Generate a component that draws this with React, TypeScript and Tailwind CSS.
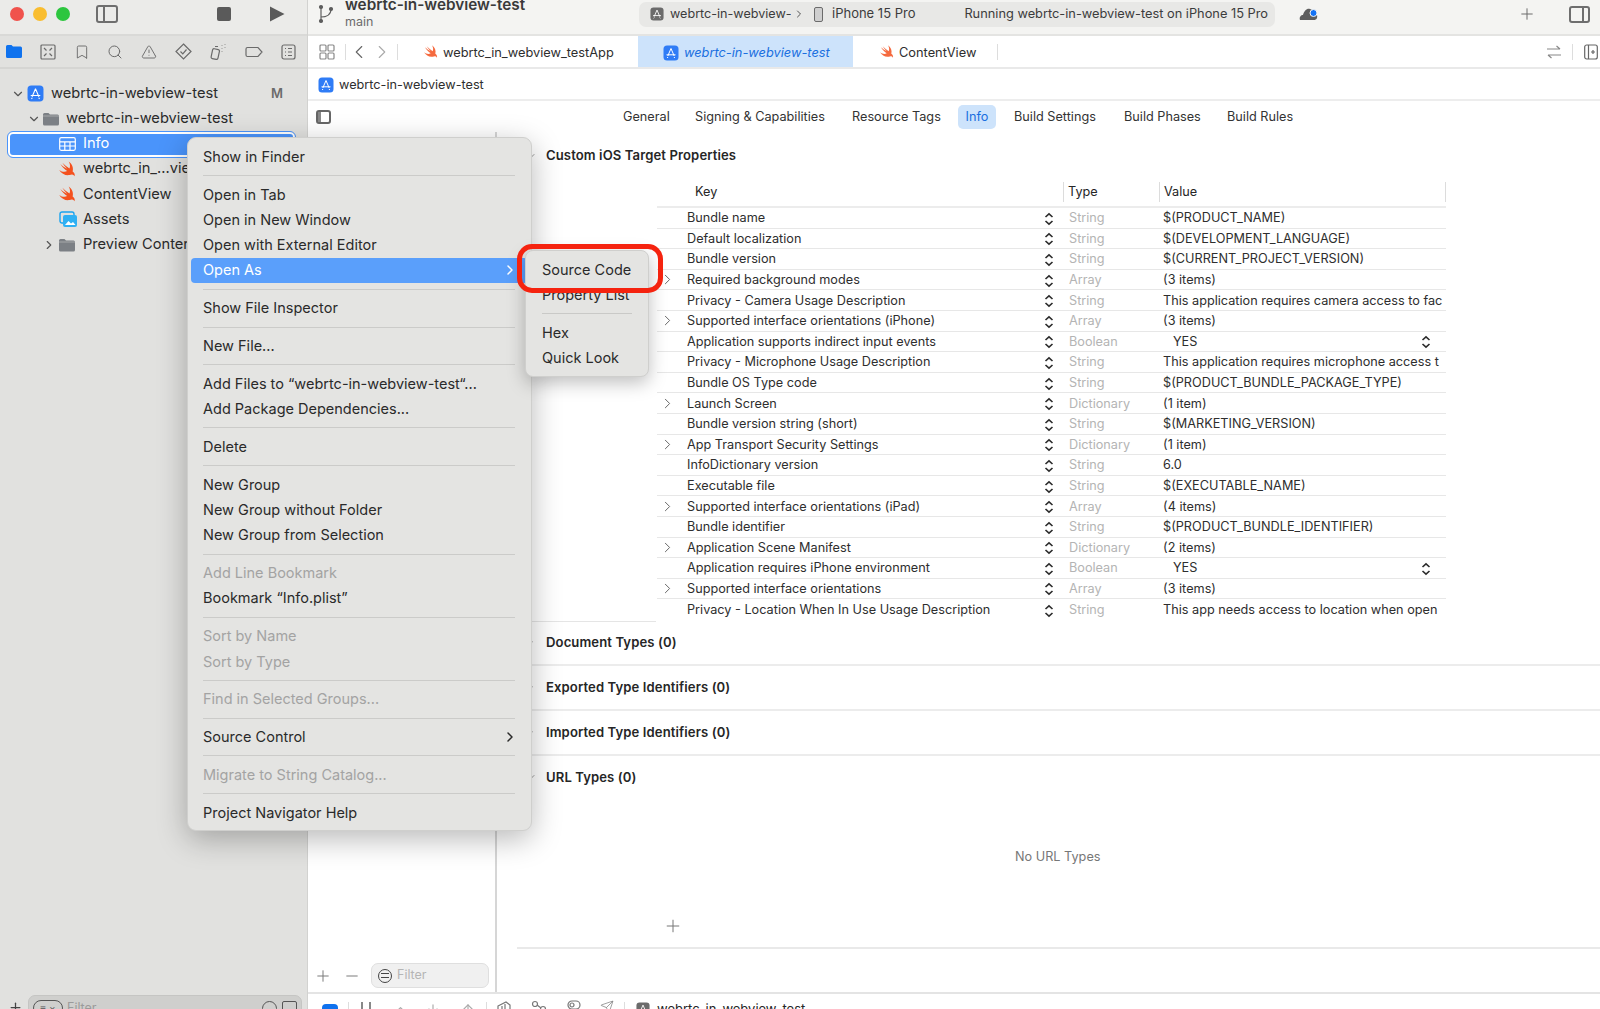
import React from "react";
import { ChevronRight, ChevronDown, ChevronLeft, Plus, Minus, Search, TriangleAlert, Bookmark, ArrowUp, ArrowDown, ChevronUp, Send } from "lucide-react";

const Swift = ({ s = 19, o = 1 }: { s?: number; o?: number }) => (
  <svg width={s} height={s} viewBox="0 0 24 24" style={{ opacity: o }} className="shrink-0">
    <path d="M18.500 14.500c1.300-4.500-.7-9.500-5-12.500 1.700 2.700 2.300 6 1 8.700C11 8.500 8 6 5.500 3.500c1.500 2.500 3.500 5 6 7.500C8.500 9.500 5.500 7.500 3 5c2 3.500 5 6.500 8.500 9-3 1.500-6.500 1-10-1.500 3 4.500 8 7.500 13 6.500 2-.5 3-1 4-.5 1 .3 2 1 2.500 2 .5-2.500-.3-4.500-2.500-6z" fill="#f4511e" />
  </svg>
);

const AppIcon = ({ s = 16, muted = false }: { s?: number; muted?: boolean }) => (
  <svg width={s} height={s} viewBox="0 0 16 16" className="shrink-0">
    <rect x="0.500" y="0.500" width="15" height="15" rx="3.500" fill={muted ? "#6b6b6b" : "#2f7cf6"} />
    <path d="M8 3.500 4.800 11M8 3.500l3.200 7.500M3.500 9.800h9M5 12l-.8 1M11 12l.8 1" stroke="#fff" strokeWidth="1" fill="none" />
  </svg>
);

const Folder = ({ s = 18 }: { s?: number }) => (
  <svg width={s} height={s} viewBox="0 0 18 18" className="shrink-0">
    <path d="M1 4.500A1.500 1.500 0 0 1 2.500 3h4l1.500 1.500h7.500A1.500 1.500 0 0 1 17 6v8a1.500 1.500 0 0 1-1.500 1.500h-13A1.500 1.500 0 0 1 1 14z" fill="#7c8085" />
    <rect x="1" y="5.500" width="16" height="1" fill="#a5a7aa" />
  </svg>
);

const Stroke = ({ children, w = 18, h = 18, vb = "0 0 18 18", c = "#6a6a6a", className = "" }: { children: React.ReactNode; w?: number; h?: number; vb?: string; c?: string; className?: string }) => (
  <svg width={w} height={h} viewBox={vb} fill="none" stroke={c} strokeWidth="1.200" className={`shrink-0 ${className}`}>{children}</svg>
);

const Updown = () => (
  <svg width="10" height="14" viewBox="0 0 10 14" fill="none" stroke="#2c2c2c" strokeWidth="1.600" className="shrink-0 mt-[2px]">
    <path d="M1.500 5 5 1.800 8.500 5M1.500 9 5 12.200 8.500 9" />
  </svg>
);

const rows: [string, string, string, boolean?, boolean?][] = [
  ["Bundle name", "String", "$(PRODUCT_NAME)"],
  ["Default localization", "String", "$(DEVELOPMENT_LANGUAGE)"],
  ["Bundle version", "String", "$(CURRENT_PROJECT_VERSION)"],
  ["Required background modes", "Array", "(3 items)", true],
  ["Privacy - Camera Usage Description", "String", "This application requires camera access to fac"],
  ["Supported interface orientations (iPhone)", "Array", "(3 items)", true],
  ["Application supports indirect input events", "Boolean", "YES", false, true],
  ["Privacy - Microphone Usage Description", "String", "This application requires microphone access t"],
  ["Bundle OS Type code", "String", "$(PRODUCT_BUNDLE_PACKAGE_TYPE)"],
  ["Launch Screen", "Dictionary", "(1 item)", true],
  ["Bundle version string (short)", "String", "$(MARKETING_VERSION)"],
  ["App Transport Security Settings", "Dictionary", "(1 item)", true],
  ["InfoDictionary version", "String", "6.0"],
  ["Executable file", "String", "$(EXECUTABLE_NAME)"],
  ["Supported interface orientations (iPad)", "Array", "(4 items)", true],
  ["Bundle identifier", "String", "$(PRODUCT_BUNDLE_IDENTIFIER)"],
  ["Application Scene Manifest", "Dictionary", "(2 items)", true],
  ["Application requires iPhone environment", "Boolean", "YES", false, true],
  ["Supported interface orientations", "Array", "(3 items)", true],
  ["Privacy - Location When In Use Usage Description", "String", "This app needs access to location when open"],
];

type M = { t?: string; d?: boolean; a?: boolean; s?: boolean; sep?: boolean };
const menu: M[] = [
  { t: "Show in Finder" }, { sep: true },
  { t: "Open in Tab" }, { t: "Open in New Window" }, { t: "Open with External Editor" }, { t: "Open As", a: true, s: true }, { sep: true },
  { t: "Show File Inspector" }, { sep: true },
  { t: "New File..." }, { sep: true },
  { t: "Add Files to “webrtc-in-webview-test“..." }, { t: "Add Package Dependencies..." }, { sep: true },
  { t: "Delete" }, { sep: true },
  { t: "New Group" }, { t: "New Group without Folder" }, { t: "New Group from Selection" }, { sep: true },
  { t: "Add Line Bookmark", d: true }, { t: "Bookmark “Info.plist”" }, { sep: true },
  { t: "Sort by Name", d: true }, { t: "Sort by Type", d: true }, { sep: true },
  { t: "Find in Selected Groups...", d: true }, { sep: true },
  { t: "Source Control", a: true }, { sep: true },
  { t: "Migrate to String Catalog...", d: true }, { sep: true },
  { t: "Project Navigator Help" },
];

const Section = ({ t, open = false, line = true, lift = false }: { t: string; open?: boolean; line?: boolean; lift?: boolean }) => (
  <div className={`flex items-center h-[45px] pl-[28px] text-[13.100px] font-semibold text-[#262626] tracking-[0.1px] ${line ? "border-b-2 border-[#ececec]" : lift ? "pb-[2px]" : "pt-[2px]"}`}>
    {open ? <ChevronDown size={12} color="#999" className="shrink-0" /> : <ChevronRight size={12} color="#aaa" className="shrink-0" />}
    <span className="ml-[9px]">{t}</span>
  </div>
);

const Sep = () => <div className="h-[12.500px] flex items-center pl-[12px] pr-[13px]"><div className="h-px w-full bg-[#cbcbc9]" /></div>;

const Divider = ({ className = "" }: { className?: string }) => <span className={`w-px h-[16px] bg-[#ddd] shrink-0 ${className}`} />;

export default function App() {
  return (
    <div className="relative w-[1600px] h-[1009px] overflow-hidden flex bg-white text-[#262626]" style={{ fontFamily: "Inter, 'Liberation Sans', sans-serif" }}>
      {/* Sidebar */}
      <aside className="w-[308px] shrink-0 flex flex-col bg-[#e1e1df] border-r border-[#d2d2d0]">
        <div className="h-[36px] shrink-0 flex items-center bg-[#ebebe9] border-b-2 border-[#d9d9d7] pl-[10px] pb-[6px]">
          <span className="w-[14px] h-[14px] rounded-full bg-[#f0524c]" />
          <span className="w-[14px] h-[14px] rounded-full bg-[#f9bd2f] ml-[9px]" />
          <span className="w-[14px] h-[14px] rounded-full bg-[#2cc63e] ml-[9px]" />
          <span className="ml-[26px] w-[22px] h-[18px] rounded-[3px] border-2 border-[#6e6e6e] flex">
            <span className="w-[7px] border-r-2 border-[#6e6e6e]" />
          </span>
          <span className="ml-[99px] w-[14px] h-[14px] rounded-[2px] bg-[#5a5a5a]" />
          <svg width="16" height="16" viewBox="0 0 16 16" className="ml-[38px]"><path d="M1 0.500 15.500 8 1 15.500z" fill="#5a5a5a" /></svg>
        </div>
        <div className="h-[33px] shrink-0 flex items-center justify-between pl-[6px] pr-[11px] border-b-2 border-[#d5d5d3]">
          <svg width="16" height="13" viewBox="0 0 16 13"><path d="M0 1.500A1.500 1.500 0 0 1 1.500 0h4l1.500 1.500h7.500A1.500 1.500 0 0 1 16 3v8.500a1.500 1.500 0 0 1-1.500 1.500h-13A1.500 1.500 0 0 1 0 11.500z" fill="#0f72ee" /></svg>
          <Stroke w={16} h={16} vb="0 0 16 16"><rect x="1" y="1" width="14" height="14" rx="1" /><path d="M4 4l2.500 2.500M12 4 9.500 6.500M4 12l2.500-2.500M12 12 9.500 9.500" /></Stroke>
          <Bookmark size={16} color="#6a6a6a" strokeWidth={1.4} />
          <Search size={16} color="#6a6a6a" strokeWidth={1.5} />
          <TriangleAlert size={16} color="#6a6a6a" strokeWidth={1.4} />
          <Stroke w={17} h={17} vb="0 0 17 17"><path d="M8.500 1 16 8.500 8.500 16 1 8.500z" /><path d="M5.500 8.500 7.800 10.800 11.500 6.500" /></Stroke>
          <Stroke w={18} h={17} vb="0 0 18 17"><rect x="2" y="6" width="7" height="10" rx="1.500" transform="rotate(12 5 10)" /><path d="M5 3.500h3M12 2v.5M15 1v.5M12 5v.5M15 4v.5M12 8v.5" /></Stroke>
          <Stroke w={18} h={12} vb="0 0 18 12"><path d="M2.500 1.500H13l4 4.500-4 4.500H2.500A1.500 1.500 0 0 1 1 9V3a1.500 1.500 0 0 1 1.500-1.500z" /></Stroke>
          <Stroke w={15} h={16} vb="0 0 15 16"><rect x="1" y="1" width="13" height="14" rx="2" /><path d="M4 4.500h1M7 4.500h4M4 8h1M7 8h4M4 11.500h1M7 11.500h4" /></Stroke>
        </div>
        <div className="flex-1 pt-[12px] text-[14.650px] text-[#2b2b2b]">
          <div className="h-[25.300px] flex items-center pl-[11px]">
            <ChevronDown size={14} color="#555" />
            <span className="ml-[2px]"><AppIcon s={17} /></span>
            <span className="ml-[7px]">webrtc-in-webview-test</span>
            <span className="ml-auto mr-[24px] font-semibold text-[13px] text-[#6b6b6b]">M</span>
          </div>
          <div className="h-[25.300px] flex items-center pl-[27px]">
            <ChevronDown size={14} color="#555" />
            <span className="ml-[1px]"><Folder /></span>
            <span className="ml-[6px]">webrtc-in-webview-test</span>
          </div>
          <div className="h-[25px] ml-[8px] mr-[12px] flex items-center pl-[49px] bg-[#4a94fb] border-2 border-white rounded-[5px] outline outline-[#4a94fb] text-white">
            <svg width="17" height="14" viewBox="0 0 17 14" fill="none" stroke="#fff" strokeWidth="1.200"><rect x="0.700" y="0.700" width="15.600" height="12.600" rx="1.500" /><path d="M.7 4.800h15.600M.7 9h15.600M5.800 4.800v8.500M11 4.800v8.500" /></svg>
            <span className="ml-[7px]">Info</span>
          </div>
          <div className="h-[25.300px] flex items-center pl-[58px]"><Swift /><span className="ml-[6px]">webrtc_in_...view</span></div>
          <div className="h-[25.300px] flex items-center pl-[58px]"><Swift /><span className="ml-[6px]">ContentView</span></div>
          <div className="h-[25.300px] flex items-center pl-[59px]">
            <svg width="19" height="17" viewBox="0 0 19 17" className="shrink-0"><rect x="1" y="1" width="14" height="11" rx="2" fill="none" stroke="#19a3ef" strokeWidth="1.400" /><rect x="4" y="4" width="14" height="12" rx="2" fill="#2fb0f3" /><path d="M6 14l3.500-4 2.500 2.500 2-1.500 2.500 3z" fill="#fff" /></svg>
            <span className="ml-[5px]">Assets</span>
          </div>
          <div className="h-[25.300px] flex items-center pl-[42px]">
            <ChevronRight size={14} color="#555" />
            <span className="ml-[2px]"><Folder /></span>
            <span className="ml-[7px] whitespace-nowrap">Preview Content</span>
          </div>
        </div>
        <div className="h-[14px] shrink-0 flex items-start pl-[8px] pr-[5px]">
          <Plus size={15} color="#444" className="mt-[5px]" />
          <div className="ml-[5px] flex-1 h-[26px] rounded-[7px] bg-[#cfcfcd] border border-[#c5c5c3] flex items-center px-[4px] text-[12.500px] text-[#9b9b9b]">
            <span className="w-[30px] h-[16px] rounded-full border border-[#555] mr-[4px] flex items-center justify-center text-[#555] text-[10px] leading-none">≡ ×</span>
            <span>Filter</span>
            <span className="ml-auto w-[15px] h-[15px] rounded-full border border-[#555]" />
            <span className="ml-[5px] w-[15px] h-[15px] rounded-[2px] border border-[#555]" />
          </div>
        </div>
      </aside>

      {/* Editor */}
      <main className="flex-1 min-w-0 flex flex-col">
        <div className="h-[36px] shrink-0 flex items-center bg-[#f4f4f2] border-b-2 border-[#e4e4e2] pb-[6px]">
          <Stroke w={16} h={22} vb="0 0 16 22" c="#5e5e5e" className="ml-[10px]"><circle cx="3" cy="4" r="1.500" fill="#5e5e5e" /><circle cx="3" cy="18" r="1.500" fill="#5e5e5e" /><circle cx="13" cy="6" r="1.500" fill="#5e5e5e" /><path d="M3 4v14M3 14c5 0 10-2 10-8" /></Stroke>
          <div className="ml-[11px] w-[294px] mt-[2px] leading-none">
            <div className="text-[15.300px] font-semibold text-[#3a3a3a] -mt-[4px]">webrtc-in-webview-test</div>
            <div className="text-[12.500px] text-[#6b6b6b] mt-[4px]">main</div>
          </div>
          <div className="w-[636px] h-[25px] rounded-[7px] bg-[#e8e8e6] flex items-center pl-[11px] text-[12.800px] text-[#3c3c3c] whitespace-nowrap">
            <AppIcon s={14} muted />
            <span className="ml-[6px] w-[121px] overflow-hidden text-[12.600px]">webrtc-in-webview-</span>
            <ChevronRight size={12} className="ml-[2px]" color="#555" />
            <span className="ml-[9px] w-[9px] h-[15px] rounded-[2px] border border-[#6b6b6b] bg-[#cfcfcf]" />
            <span className="ml-[9px] text-[13px]">iPhone 15 Pro</span>
            <span className="ml-auto mr-[7px]">Running webrtc-in-webview-test on iPhone 15 Pro</span>
          </div>
          <svg width="20" height="14" viewBox="0 0 20 14" className="ml-[24px]"><path d="M1 13c-1-3 1-5 3-5 1-4 4-7 7-6 2 .5 3 2 3 3 3 .5 5 3 4 6-.5 1.500-2 2-3 2z" fill="#5e5e5e" /><circle cx="14.500" cy="6" r="3.500" fill="#1473f5" stroke="#f4f4f2" /></svg>
          <Plus size={18} color="#6a6a6a" strokeWidth={1.300} className="ml-[199px]" />
          <span className="ml-[33px] w-[21px] h-[17px] rounded-[3px] border-2 border-[#6e6e6e] flex justify-end shrink-0"><span className="w-[6px] border-l-2 border-[#6e6e6e]" /></span>
        </div>

        <div className="h-[33px] shrink-0 flex items-center border-b-2 border-[#e9e9e9] text-[12.800px] text-[#2e2e2e] whitespace-nowrap">
          <Stroke w={16} h={16} vb="0 0 16 16" c="#888" className="ml-[11px]"><rect x="1" y="1" width="6" height="6" rx="1" /><rect x="9" y="1" width="6" height="6" rx="1" /><rect x="1" y="9" width="6" height="6" rx="1" /><rect x="9" y="9" width="6" height="6" rx="1" /></Stroke>
          <Divider className="ml-[10px]" />
          <ChevronLeft size={22} color="#666" strokeWidth={1.200} className="ml-[2px]" />
          <ChevronRight size={22} color="#aaa" strokeWidth={1.200} className="ml-[1px]" />
          <Divider className="ml-[4px]" />
          <span className="ml-[25px]"><Swift s={16} o={0.85} /></span>
          <span className="ml-[4px] w-[170px] pt-[2px]">webrtc_in_webview_testApp</span>
          <div className="ml-[25px] w-[215px] h-full bg-[#cde3fb] flex items-center pl-[25px] text-[#1a6fe0] italic pt-[2px]">
            <AppIcon s={16} />
            <span className="ml-[5px]">webrtc-in-webview-test</span>
          </div>
          <span className="ml-[26px]"><Swift s={16} o={0.85} /></span>
          <span className="ml-[4px] w-[77px] pt-[2px]">ContentView</span>
          <Divider className="ml-[21px]" />
          <div className="ml-auto flex items-center pr-[2px]">
            <Stroke w={16} h={16} vb="0 0 16 16" c="#888"><path d="M1 5h13M10.500 2 14 5M15 11H2M5.500 14 2 11" /></Stroke>
            <Divider className="ml-[10px] h-[14px]" />
            <Stroke w={14} h={16} vb="0 0 14 16" c="#666" className="ml-[11px]"><rect x="0.700" y="1" width="12.600" height="14" rx="2" /><path d="M4.500 1v14M9 6v4M7 8h4" /></Stroke>
          </div>
        </div>

        <div className="h-[32px] shrink-0 flex items-center pl-[10px] pt-[2px] border-b-2 border-[#ededed] text-[12.700px] text-[#2e2e2e]">
          <AppIcon s={16} />
          <span className="ml-[5px]">webrtc-in-webview-test</span>
        </div>

        <div className="flex-1 min-h-0 flex flex-col">
          <div className="h-[31px] shrink-0 flex items-center text-[12.700px] text-[#333] whitespace-nowrap pl-[8px]">
            <span className="w-[15px] h-[14px] rounded-[3px] border-2 border-[#666] flex"><span className="w-[3px] bg-[#888]" /></span>
            <span className="ml-[292px] w-[46px]">General</span>
            <span className="ml-[26px] w-[131px]">Signing &amp; Capabilities</span>
            <span className="ml-[26px] w-[88px]">Resource Tags</span>
            <span className="ml-[18px] w-[38px] h-[24px] flex items-center justify-center rounded-[5px] bg-[#cde3fb] text-[#1a6fe0]">Info</span>
            <span className="ml-[18px] w-[83px]">Build Settings</span>
            <span className="ml-[27px] w-[76px]">Build Phases</span>
            <span className="ml-[27px]">Build Rules</span>
          </div>

          <div className="flex-1 min-h-0 flex">
            <div className="w-[189px] shrink-0 flex flex-col justify-end border-r-2 border-[#d6d6d6] pb-[4px]">
              <div className="flex items-center pl-[6px]">
                <Plus size={18} color="#777" strokeWidth={1.300} />
                <Minus size={18} color="#777" strokeWidth={1.300} className="ml-[11px]" />
                <div className="ml-[10px] w-[118px] h-[25px] rounded-[7px] bg-[#f0f0f0] border border-[#dfdfdf] flex items-center pl-[6px] text-[12.500px] text-[#b5b5b5]">
                  <span className="w-[14px] h-[14px] rounded-full border border-[#444] mr-[5px] flex items-center justify-center"><span className="w-[8px] h-[5px] border-y border-[#444]" /></span>
                  Filter
                </div>
              </div>
            </div>

            <div className="flex-1 min-w-0 flex flex-col overflow-hidden">
              <Section t="Custom iOS Target Properties" open line={false} />
              <div className="ml-[160px] w-[789px] mt-[1px] text-[12.700px] whitespace-nowrap">
                <div className="h-[30px] flex items-center border-b-2 border-[#ececec] relative">
                  <span className="pl-[38px] w-[406px]">Key</span>
                  <span className="w-px h-[20px] bg-[#dcdcdc]" />
                  <span className="pl-[4px] w-[95px]">Type</span>
                  <span className="w-px h-[20px] bg-[#dcdcdc]" />
                  <span className="pl-[4px] flex-1">Value</span>
                  <span className="w-px h-[20px] bg-[#dcdcdc]" />
                </div>
                {rows.map(([k, ty, v, exp, sel]) => (
                  <div key={k} className="h-[20.600px] flex items-center border-b border-[#e7e7e7] last:border-b-0 relative">
                    <span className="w-[30px] pl-[2px] shrink-0 flex">{exp ? <ChevronRight size={17} color="#666" strokeWidth={1.400} /> : null}</span>
                    <span className="w-[357px] shrink-0 overflow-hidden text-[#2e2e2e]">{k}</span>
                    <Updown />
                    <span className="ml-[15px] w-[94px] shrink-0 text-[#b4b4b4]">{ty}</span>
                    <span className={`flex-1 overflow-hidden ${sel ? "pl-[10px] flex items-center justify-between pr-[15px]" : ""} text-[#2e2e2e]`}>
                      {v}
                      {sel ? <Updown /> : null}
                    </span>
                  </div>
                ))}
              </div>
              <div className="ml-[19px] h-[1px] mt-[1px] bg-[#e5e5e5] w-[140px]" />
              <div className="-mt-[1px]">
                <Section t="Document Types (0)" />
                <Section t="Exported Type Identifiers (0)" />
                <Section t="Imported Type Identifiers (0)" />
                <Section t="URL Types (0)" open line={false} lift />
              </div>
              <div className="mt-[46px] pl-[518px] text-[12.700px] text-[#777]">No URL Types</div>
              <div className="mt-[50px] pl-[166px]"><Plus size={20} color="#777" strokeWidth={1.200} /></div>
              <div className="mt-[11px] ml-[20px] h-[2px] bg-[#e9e9e9]" />
            </div>
          </div>
        </div>

        <div className="h-[17px] shrink-0 border-t-2 border-[#e4e4e4] flex items-start text-[13px] whitespace-nowrap overflow-hidden">
          <span className="ml-[14px] mt-[10px] w-[16px] h-[10px] rounded-t-[4px] bg-[#0f72ee] shrink-0" />
          <Divider className="ml-[10px] mt-[8px]" />
          <span className="ml-[12px] mt-[8px] w-[10px] h-[12px] border-x-2 border-[#888] shrink-0" />
          <ChevronUp size={15} color="#aaa" className="ml-[22px] mt-[8px] shrink-0" />
          <ArrowDown size={14} color="#aaa" className="ml-[18px] mt-[8px] shrink-0" />
          <ArrowUp size={14} color="#aaa" className="ml-[21px] mt-[8px] shrink-0" />
          <Divider className="ml-[11px] mt-[8px]" />
          <Stroke w={14} h={14} vb="0 0 14 14" c="#777" className="ml-[10px] mt-[7px]"><path d="M1 5l8-4 4 3v7l-8 2-4-3zM5 5v8M8 3v8" /></Stroke>
          <Stroke w={16} h={14} vb="0 0 16 14" c="#777" className="ml-[20px] mt-[6px]"><circle cx="4" cy="4" r="2.500" /><circle cx="12" cy="9" r="2.500" /><path d="M6 5l4 3" /></Stroke>
          <Stroke w={14} h={10} vb="0 0 14 10" c="#777" className="ml-[20px] mt-[6px]"><rect x="1" y="1" width="12" height="8" rx="4" /><circle cx="5" cy="5" r="2" /></Stroke>
          <Send size={14} color="#777" strokeWidth={1.200} className="ml-[19px] mt-[6px] shrink-0" />
          <Divider className="ml-[10px] mt-[8px]" />
          <span className="ml-[11px] mt-[8px]"><AppIcon s={14} muted /></span>
          <span className="ml-[7px] mt-[6px]">webrtc-in-webview-test</span>
        </div>
      </main>

      {/* Context menu */}
      <div className="absolute left-[187px] top-[137px] w-[345px] h-[694px] rounded-[9px] bg-[#e4e4e2] border border-[#cfcfcd] shadow-[0_8px_30px_rgba(0,0,0,0.28)] py-[6px] px-[3px] text-[14.500px] text-[#2a2a2a]">
        {menu.map((m, i) =>
          m.sep ? <Sep key={i} /> : (
            <div key={i} className={`h-[25.300px] flex items-center pl-[12px] pr-[10px] rounded-[4px] whitespace-nowrap ${m.s ? "bg-[#5a9ffb] text-white" : ""} ${m.d ? "text-[#a3a3a3]" : ""}`}>
              {m.t}
              {m.a ? <ChevronRight size={16} className="ml-auto" strokeWidth={2.200} /> : null}
            </div>
          )
        )}
      </div>

      {/* Submenu */}
      <div className="absolute left-[525px] top-[250px] w-[124px] h-[127px] rounded-[8px] bg-[#e4e4e2] border border-[#cfcfcd] shadow-[0_6px_18px_rgba(0,0,0,0.25)] pt-[6px] px-[16px] text-[14.500px] text-[#2a2a2a]">
        <div className="h-[25.300px] flex items-center">Source Code</div>
        <div className="h-[25.300px] flex items-center">Property List</div>
        <div className="h-[12.500px] flex items-center"><div className="h-px w-full bg-[#c9c9c7]" /></div>
        <div className="h-[25.300px] flex items-center">Hex</div>
        <div className="h-[25.300px] flex items-center">Quick Look</div>
      </div>

      {/* Highlight */}
      <div className="absolute left-[517px] top-[244px] w-[146px] h-[49px] rounded-[15px] border-[5px] border-[#f5230f]" />
    </div>
  );
}
